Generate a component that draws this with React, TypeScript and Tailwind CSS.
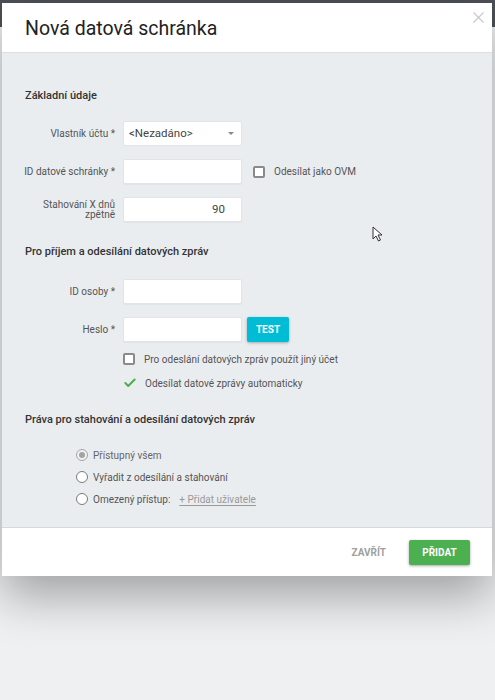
import { Check } from 'lucide-react'

const font = { fontFamily: 'Roboto, "Noto Sans", sans-serif' }

function Label({ children }: { children: React.ReactNode }) {
  return (
    <div className="w-[90px] shrink-0 flex justify-end text-right text-[10px] leading-[12px] text-[#555]">
      {children}
    </div>
  )
}

function Input({ value }: { value?: string }) {
  return (
    <div className="w-[119px] h-[25px] bg-white rounded-[2px] border border-[#e2e4e7] shadow-[0_1px_1px_rgba(0,0,0,0.04)] flex items-center justify-end pr-[16px] text-[11.5px] text-[#444]">
      {value}
    </div>
  )
}

function Checkbox() {
  return <div className="w-[12px] h-[12px] border-2 border-[#8a8a8a] rounded-[2px] bg-white shrink-0" />
}

function Radio({ checked }: { checked?: boolean }) {
  return checked ? (
    <div className="w-[12px] h-[12px] rounded-full border border-[#a3a3a3] bg-[#f3f3f3] flex items-center justify-center shrink-0">
      <div className="w-[6px] h-[6px] rounded-full bg-[#a3a3a3]" />
    </div>
  ) : (
    <div className="w-[12px] h-[12px] rounded-full border-[1.5px] border-[#7a7a7a] bg-white shrink-0" />
  )
}

export default function App() {
  return (
    <div
      className="relative w-[495px] h-[700px] overflow-hidden pt-[3px] pl-[2px] bg-[linear-gradient(to_bottom,#4d5054_27px,#eff0f2_27px)]"
      style={font}
    >
      <div className="w-[490px] bg-white shadow-[0_20px_45px_rgba(0,0,0,0.33)]">
        {/* header */}
        <div className="relative h-[50px] flex items-center pl-[23px] border-b border-[#dde0e3]">
          <h1 className="text-[19.5px] text-[#222] font-normal mt-[2px]">Nová datová schránka</h1>
          <svg className="absolute right-[8px] top-[9px]" width="11" height="11" viewBox="0 0 11 11">
            <path d="M0.5 0.5 L10.5 10.5 M10.5 0.5 L0.5 10.5" stroke="#c9cdd0" strokeWidth="1.4" />
          </svg>
        </div>

        {/* body */}
        <div className="bg-[#eaedf0] pl-[23px] pt-[35px] pb-[19px]">
          <div className="h-[16px] flex items-center text-[11px] font-medium text-[#333]">Základní údaje</div>

          <div className="mt-[17px] flex items-center gap-2">
            <Label>Vlastník účtu *</Label>
            <div className="w-[119px] h-[25px] bg-white rounded-[2px] border border-[#e2e4e7] flex items-center justify-between pl-[5px] pr-[7px] text-[11.5px] text-[#444]">
              <span>&lt;Nezadáno&gt;</span>
              <div className="w-0 h-0 border-l-[3.5px] border-r-[3.5px] border-t-[3.5px] border-l-transparent border-r-transparent border-t-[#888]" />
            </div>
          </div>

          <div className="mt-[13px] flex items-center gap-2">
            <Label>
              <span className="whitespace-nowrap">ID datové schránky *</span>
            </Label>
            <Input />
            <div className="ml-[3px] flex items-center gap-[9px]">
              <Checkbox />
              <span className="text-[10px] text-[#555]">Odesílat jako OVM</span>
            </div>
          </div>

          <div className="mt-[13px] flex items-center gap-2">
            <Label>
              <div className="w-[72px] leading-[10px]">Stahování X dnů zpětně</div>
            </Label>
            <Input value="90" />
          </div>

          <div className="mt-[22px] h-[16px] flex items-center text-[11px] font-medium text-[#333]">
            Pro příjem a odesílání datových zpráv
          </div>

          <div className="mt-[19px] flex items-center gap-2">
            <Label>ID osoby *</Label>
            <Input />
          </div>

          <div className="mt-[13px] flex items-center gap-2">
            <Label>Heslo *</Label>
            <Input />
            <button className="ml-[-3px] w-[42px] h-[25px] bg-[#00bcd4] text-white text-[10px] font-bold rounded-[2px] shadow-[0_1px_3px_rgba(0,0,0,0.3)]">
              TEST
            </button>
          </div>

          <div className="mt-[8px] h-[18px] flex items-center gap-[9px] pl-[98px]">
            <Checkbox />
            <span className="text-[10px] text-[#555]">Pro odeslání datových zpráv použít jiný účet</span>
          </div>

          <div className="mt-[6px] h-[18px] flex items-center gap-[8px] pl-[98px]">
            <Check className="w-[14px] h-[14px] text-[#4caf50] shrink-0" strokeWidth={3.5} />
            <span className="text-[10px] text-[#555]">Odesílat datové zprávy automaticky</span>
          </div>

          <div className="mt-[20px] h-[16px] flex items-center text-[11px] font-medium text-[#333]">
            Práva pro stahování a odesílání datových zpráv
          </div>

          <div className="pl-[51px]">
            <div className="mt-[18px] h-[18px] flex items-center gap-[5px]">
              <Radio checked />
              <span className="text-[10px] text-[#666]">Přístupný všem</span>
            </div>
            <div className="mt-[4px] h-[18px] flex items-center gap-[5px]">
              <Radio />
              <span className="text-[10px] text-[#555]">Vyřadit z odesílání a stahování</span>
            </div>
            <div className="mt-[4px] h-[18px] flex items-center gap-[5px]">
              <Radio />
              <span className="text-[10px] text-[#555]">Omezený přístup:</span>
              <span className="ml-[4px] text-[10px] text-[#999] underline underline-offset-2">+ Přidat uživatele</span>
            </div>
          </div>
        </div>

        {/* footer */}
        <div className="h-[49px] border-t border-[#d6d9dc] flex items-center justify-end pr-[22px] gap-[23px]">
          <span className="text-[10px] font-bold text-[#a0a0a0]">ZAVŘÍT</span>
          <button className="w-[61px] h-[25px] bg-[#4caf50] text-white text-[10px] font-bold rounded-[2px] shadow-[0_1px_3px_rgba(0,0,0,0.35)]">
            PŘIDAT
          </button>
        </div>
      </div>

      {/* mouse cursor */}
      <svg className="absolute left-[372px] top-[226px]" width="12" height="17" viewBox="0 0 12 17">
        <path d="M1 1 L1 13 L4 10 L6.5 15 L8.5 14 L6 9 L10 9 Z" fill="white" stroke="#333" strokeWidth="1" strokeLinejoin="round" />
      </svg>
    </div>
  )
}
